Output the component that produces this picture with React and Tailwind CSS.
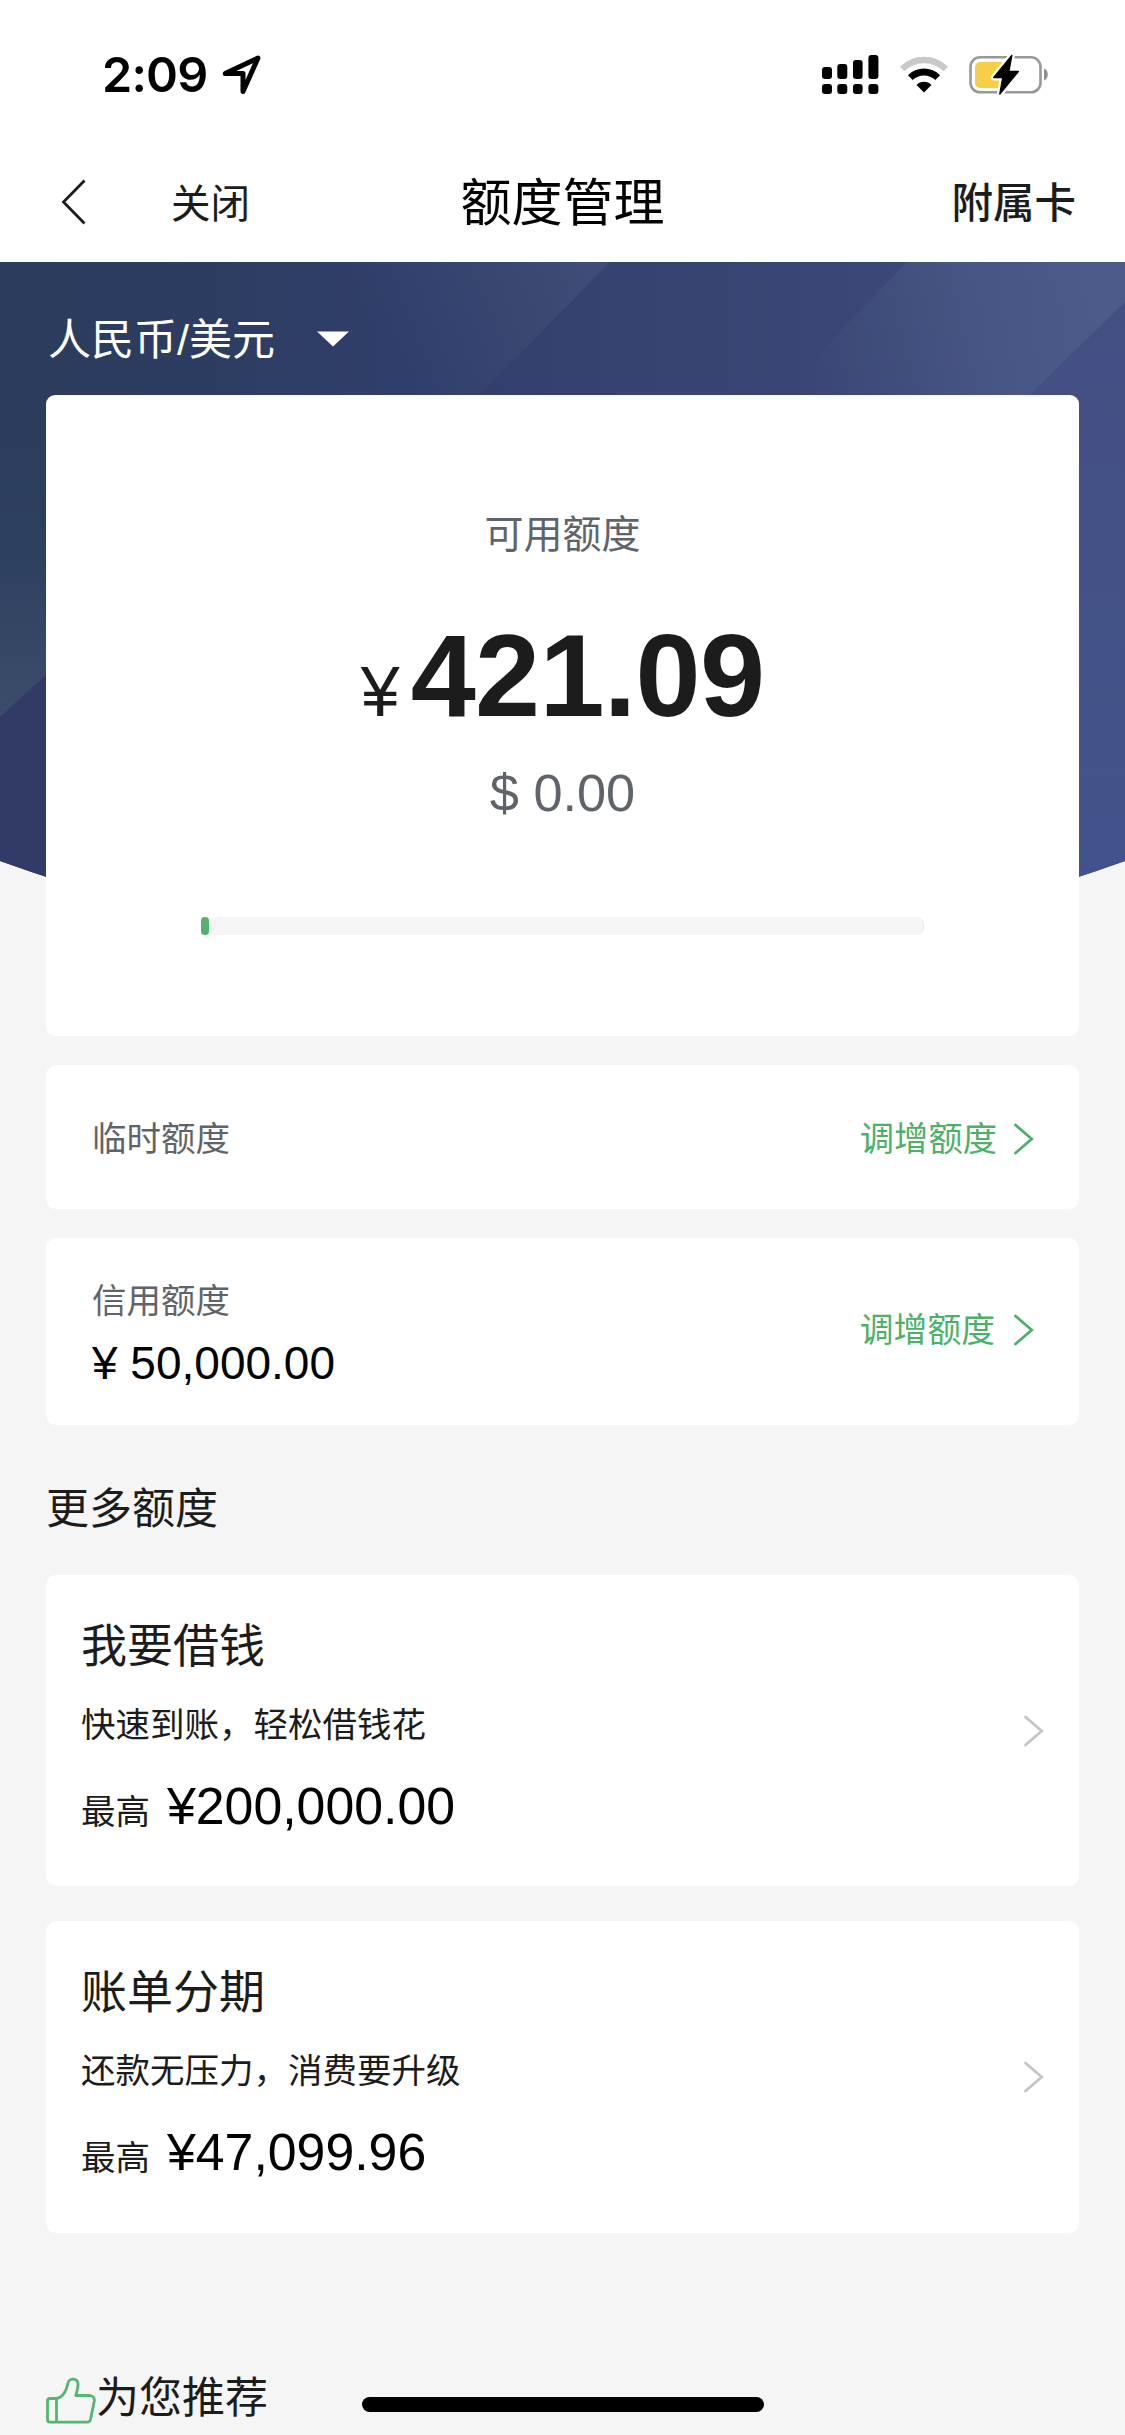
const CJK = "font-['Liberation_Sans','Noto_Sans_CJK_SC',sans-serif]";

function StatusBar() {
  return (
    <div className="flex h-[150px] items-start justify-between pl-[102px] pr-[76px]">
      <div className="flex items-center pt-[44px]">
        <span className="font-['Inter',sans-serif] text-[48.5px] font-semibold leading-[62px] tracking-[-0.8px] text-black">2:09</span>
        <svg className="ml-[14px]" width="40" height="42" viewBox="0 0 40 42" fill="none" stroke="#000" strokeWidth="5" strokeLinejoin="round">
          <path d="M3.2 19.5 L36 4 L21 37.5 L21 19.5 Z" />
        </svg>
      </div>
      <div className="flex items-center pt-[54px]">
        <svg width="57" height="42" viewBox="0 0 57 42" fill="#000">
          <rect x="0" y="13" width="10" height="12" rx="3" />
          <rect x="15.3" y="10" width="10" height="15" rx="3" />
          <rect x="31" y="6" width="9.6" height="19" rx="3" />
          <rect x="46.4" y="1" width="10" height="24" rx="3" />
          <rect x="0" y="30" width="10" height="10" rx="3" />
          <rect x="15.3" y="30" width="10" height="10" rx="3" />
          <rect x="31" y="30" width="9.6" height="10" rx="3" />
          <rect x="46.4" y="30" width="10" height="10" rx="3" />
        </svg>
        <svg className="ml-[21px]" width="48" height="42" viewBox="0 0 48 42" fill="none">
          <path d="M2.2 15 A31 31 0 0 1 45.8 15" stroke="#c9c9c9" strokeWidth="6.4" />
          <path d="M10.3 23.6 A19.5 19.5 0 0 1 37.7 23.6" stroke="#000" strokeWidth="6.8" />
          <path d="M24 38.5 L16.5 31 A10.5 10.5 0 0 1 31.5 31 Z" fill="#000" />
        </svg>
        <svg className="ml-[21px]" width="80" height="42" viewBox="0 0 80 42" fill="none">
          <rect x="1.5" y="3.3" width="70" height="35" rx="9.5" stroke="#98989a" strokeWidth="2.6" />
          <path d="M75 14.5 C80 16 80 25 75 26.5 Z" fill="#8e8e90" />
          <rect x="6" y="8" width="31" height="26" rx="5" fill="#f7ce46" />
          <g transform="translate(1.3 0)" fill="#000" strokeLinejoin="round">
            <path d="M41.5 1.5 L23.5 23.5 H32.5 L29.5 40 L48 17.5 H38.6 Z" stroke="#fff" strokeWidth="6" />
            <path d="M41.5 1.5 L23.5 23.5 H32.5 L29.5 40 L48 17.5 H38.6 Z" stroke="#000" strokeWidth="1.4" />
          </g>
        </svg>
      </div>
    </div>
  );
}

function NavBar() {
  return (
    <div className="grid h-[112px] grid-cols-3 items-start">
      <div className="flex items-start pl-[60px]">
        <svg className="mt-[29px]" width="28" height="46" viewBox="0 0 28 46" fill="none" stroke="#1c1c1e" strokeWidth="2.8">
          <path d="M24.5 1.5 L3.5 23 L24.5 44.5" />
        </svg>
        <span className="ml-[83px] mt-[24px] text-[39.5px] leading-[60px] text-[#1c1c1c]">关闭</span>
      </div>
      <h1 className="mt-[19px] text-center text-[51px] leading-[70px] text-black">额度管理</h1>
      <span className="mt-[24px] pr-[49px] text-right text-[41.5px] font-medium leading-[60px] text-[#1c1c1c]">附属卡</span>
    </div>
  );
}

/* Blue faceted backdrop with a curved lower edge. */
function Backdrop() {
  return (
    <svg className="absolute left-0 top-0" width="1125" height="670" viewBox="0 0 1125 670" preserveAspectRatio="none">
      <defs>
        <linearGradient id="base" x1="0" y1="0" x2="1" y2="0">
          <stop offset="0" stopColor="#2b3c5c" />
          <stop offset="0.2" stopColor="#2d3d62" />
          <stop offset="0.36" stopColor="#303e6b" />
          <stop offset="0.55" stopColor="#36426f" />
          <stop offset="0.8" stopColor="#3b4878" />
          <stop offset="1" stopColor="#43508a" />
        </linearGradient>
        <linearGradient id="facetA" gradientUnits="userSpaceOnUse" x1="400" y1="110" x2="600" y2="0">
          <stop offset="0" stopColor="#5d6b90" stopOpacity="0" />
          <stop offset="1" stopColor="#5d6b90" stopOpacity="0.26" />
        </linearGradient>
        <linearGradient id="facetB" gradientUnits="userSpaceOnUse" x1="800" y1="120" x2="1090" y2="20">
          <stop offset="0" stopColor="#55648c" stopOpacity="0" />
          <stop offset="0.6" stopColor="#55648c" stopOpacity="0.4" />
          <stop offset="1" stopColor="#55648c" stopOpacity="0.55" />
        </linearGradient>
        <linearGradient id="left" x1="0" y1="0" x2="0" y2="1">
          <stop offset="0" stopColor="#2b3c5c" />
          <stop offset="0.5" stopColor="#2e4060" />
          <stop offset="1" stopColor="#3d4c6b" />
        </linearGradient>
        <linearGradient id="right" x1="0" y1="0" x2="0" y2="1">
          <stop offset="0" stopColor="#454e83" />
          <stop offset="0.75" stopColor="#42548a" />
          <stop offset="1" stopColor="#43508f" />
        </linearGradient>
        <clipPath id="curve">
          <path d="M0 0 H1125 V599 Q562 801 0 599 Z" />
        </clipPath>
      </defs>
      <g clipPath="url(#curve)">
        <rect width="1125" height="670" fill="url(#base)" />
        <path d="M290 0 H610 L480 133 H155 Z" fill="url(#facetA)" />
        <path d="M907 0 H1125 V40 L1030 133 H780 Z" fill="url(#facetB)" />
        <path d="M1125 40 L1030 133 V670 H1125 Z" fill="url(#right)" />
        <path d="M0 133 H60 V400 L0 455 Z" fill="url(#left)" />
        <path d="M0 455 L60 400 V670 H0 Z" fill="#323b68" />
      </g>
    </svg>
  );
}

function Chevron({ className }) {
  return (
    <svg className={className} width="22" height="34" viewBox="0 0 22 34" fill="none" stroke="currentColor" strokeWidth="2.8" strokeLinecap="round">
      <path d="M2.5 3 L18.7 17 L2.5 31" />
    </svg>
  );
}

function AvailableCard() {
  return (
    <div className="flex h-[641px] flex-col items-center rounded-[9px] bg-white">
      <div className="mt-[110px] text-[39px] leading-[60px] text-[#5f646b]">可用额度</div>
      <div className="mt-[46px] flex items-baseline text-[#1c1c1c]">
        <span className="text-[70px] leading-[130px]">¥</span>
        <span className="ml-[11px] text-[117px] font-bold leading-[130px] tracking-[-0.7px]">421.09</span>
      </div>
      <div className="mt-[6px] text-[52.3px] leading-[60px] text-[#5f646b]">$ 0.00</div>
      <div className="mt-[94px] h-[18px] w-[723px] rounded-r-[8px] border-r border-[#dceee4] bg-[#f5f5f5]">
        <div className="h-full w-[8px] rounded-[4px] bg-[#52b36c]" />
      </div>
    </div>
  );
}

function LimitCard({ label, amount, className, actionClass }) {
  return (
    <div className={"flex items-center justify-between rounded-[10px] bg-white pl-[46px] pr-[44px] " + className}>
      <div>
        <div className="text-[34.5px] leading-[50px] text-[#5f646b]">{label}</div>
        {amount && <div className="mt-[10px] text-[46px] leading-[54px] text-black">{amount}</div>}
      </div>
      <div className={"flex items-center text-[#4db068] " + actionClass}>
        <span className="pt-[2px]">调增额度</span>
        <Chevron className="" />
      </div>
    </div>
  );
}

function OfferCard({ title, note, amount, className }) {
  return (
    <div className={"flex items-start justify-between rounded-[10px] bg-white pl-[35px] pr-[34px] " + className}>
      <div className="pt-[41px]">
        <div className="text-[46px] leading-[60px] text-[#1c1c1c]">{title}</div>
        <div className="mt-[24px] text-[34.5px] leading-[50px] text-[#1c1c1c]">{note}</div>
        <div className="mt-[26px] flex items-start">
          <span className="mt-[11px] text-[34.5px] leading-[50px] text-[#1c1c1c]">最高</span>
          <span className="ml-[17px] text-[51.8px] leading-[60px] text-black">{amount}</span>
        </div>
      </div>
      <Chevron className="mt-[139px] text-[#c4c5c8]" />
    </div>
  );
}

export default function App() {
  return (
    <div className={"relative h-[2435px] w-[1125px] overflow-hidden bg-[#f5f5f5] " + CJK}>
      <header className="bg-white">
        <StatusBar />
        <NavBar />
      </header>
      <main className="relative">
        <Backdrop />
        <div className="relative px-[46px]">
          <div className="flex h-[133px] items-start pl-[2px]">
            <span className="mt-[48px] text-[43px] leading-[60px] text-white">人民币/美元</span>
            <svg className="ml-[42px] mt-[69px]" width="32" height="16" viewBox="0 0 32 16" fill="#fff">
              <path d="M0 0.5 H32 L16 15.5 Z" />
            </svg>
          </div>
          <AvailableCard />
          <LimitCard className="mt-[29px] h-[144px] pt-[4px]" actionClass="text-[34.3px] gap-[16px]" label="临时额度" />
          <LimitCard className="mt-[29px] h-[187px] pt-[2px]" actionClass="-mt-[6px] text-[33.8px] gap-[18px]" label="信用额度" amount="¥ 50,000.00" />
          <h2 className="mt-[52px] text-[43px] leading-[64px] text-[#1c1c1c]">更多额度</h2>
          <OfferCard className="mt-[34px] h-[311px]" title="我要借钱" note="快速到账，轻松借钱花" amount="¥200,000.00" />
          <OfferCard className="mt-[35px] h-[312px]" title="账单分期" note="还款无压力，消费要升级" amount="¥47,099.96" />
          <div className="mt-[132px] flex items-start">
            <svg className="mt-[12px]" width="50" height="48" viewBox="0 0 50 48" fill="none" stroke="#55b673" strokeWidth="2.8" strokeLinejoin="round">
              <path d="M10.5 21.5 V45 M1.5 24 Q1.5 21.5 4 21.5 H10.5 C17 20.5 20.5 13 22 6 C22.8 0.8 31.5 0.5 32 7 C32.3 11 30.5 15 29.8 18.5 H44 Q49 19.5 48.3 24 L44.5 42.5 Q43.8 45.2 41 45.2 H4 Q1.5 45 1.5 42.5 Z" />
            </svg>
            <span className="mt-[1px] text-[43px] leading-[64px] text-[#1c1c1c]">为您推荐</span>
          </div>
        </div>
      </main>
      <div className="absolute left-[362px] top-[2397px] h-[15px] w-[402px] rounded-full bg-black" />
    </div>
  );
}
